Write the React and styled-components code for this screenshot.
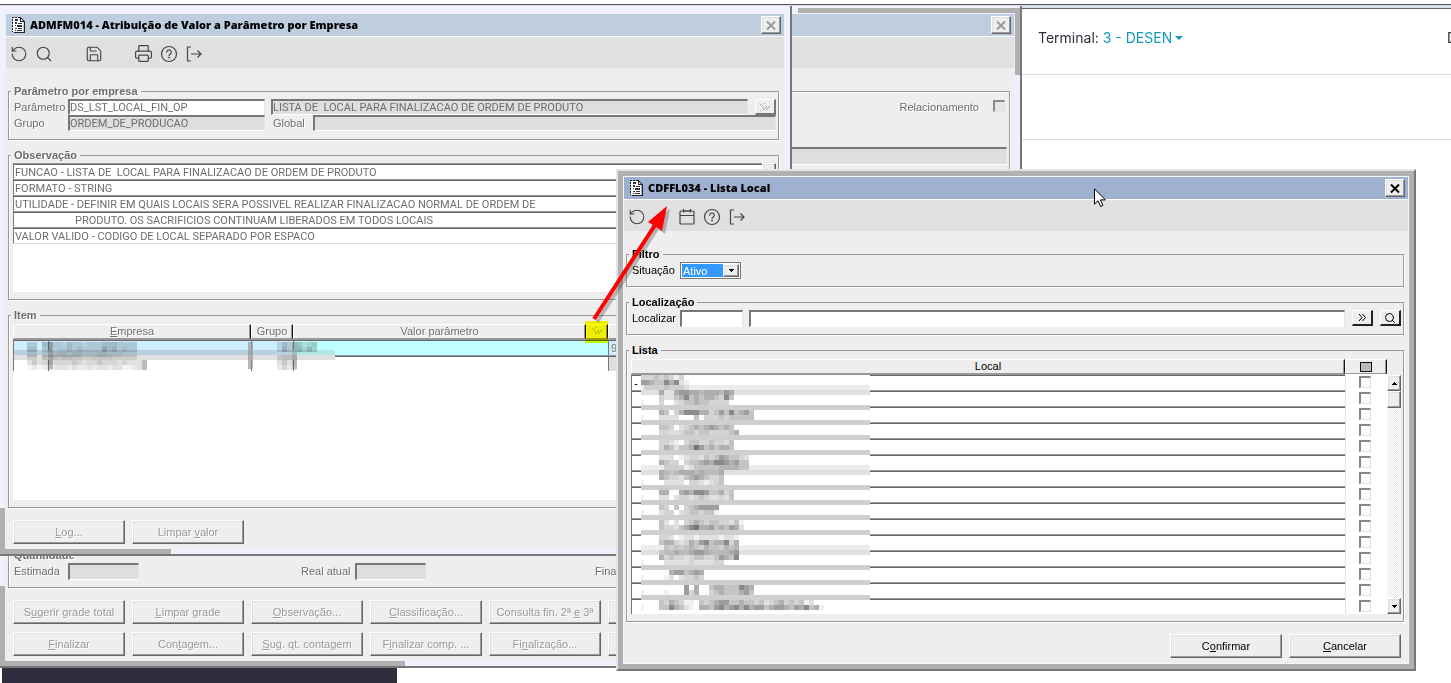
import React from "react";
import styled, { createGlobalStyle, css } from "styled-components";
import { RotateCcw, Search, Save, Printer } from "lucide-react";

const GlobalStyle = createGlobalStyle`
  * { box-sizing: border-box; }
  body {
    margin: 0;
    background: #fff;
    font-family: "Liberation Sans", Arial, sans-serif;
    font-size: 11px;
    line-height: 14px;
    color: #000;
  }
  button, input, select { font: inherit; color: inherit; margin: 0; padding: 0; border-radius: 0; }
`;

const OBSERVACOES = [
  "FUNCAO - LISTA DE  LOCAL PARA FINALIZACAO DE ORDEM DE PRODUTO",
  "FORMATO - STRING",
  "UTILIDADE - DEFINIR EM QUAIS LOCAIS SERA POSSIVEL REALIZAR FINALIZACAO NORMAL DE ORDEM DE",
  "                      PRODUTO. OS SACRIFICIOS CONTINUAM LIBERADOS EM TODOS LOCAIS",
  "VALOR VALIDO - CODIGO DE LOCAL SEPARADO POR ESPACO",
];

const ACOES = [
  ["S&ugerir grade total", "&Limpar grade", "&Observação...", "&Classificação...", "Consulta fin. 2ª &e 3ª", "Romaneio"],
  ["&Finalizar", "Con&tagem...", "&Sug. qt. contagem", "F&inalizar comp. ...", "Fi&nalização...", "Etiquetas"],
];

// censored list: one digit per 5px cell, "=" and "-" are full strips
const LISTA_MOSAICO = [
  "333434313",
  "6654475721",
  "-222232221",
  "=...4..455443444354",
  "....322457454554374",
  "1...3..23445443333",
  "=",
  "....54.3577755346474564",
  "1...2222...4.3334344444",
  "=",
  "....443.23454565454",
  "....3322344344333345",
  "=",
  "....3321.3443343324",
  "....354244586454554",
  "=",
  "....222.12332434654432",
  "....5433.3445657765644",
  "-....2222.133333444433",
  "=...4323444343334",
  "....5433245654334",
  "1....2222.3321234",
  "=",
  "....55..56577644534",
  "1...22.233234322324",
  "=",
  "....43.4.3456666",
  "1...233.23443441",
  "=",
  "....42.2.345434433241",
  "....43324578556454652",
  "=",
  "....332.122122221221",
  "....4553235467455735",
  "-....323234324332434",
  "=...2334334554333345",
  "....5343323443346547",
  "1....222223222233",
  "=",
  "......5664565",
  "1....12.23343",
  "=",
  ".........6.5..455444765",
  "1....1...635..345444564",
  "=",
  "....4354311.43456644544342345343412",
  "1...4475421.5546756757566456654657451",
];

// same coding, each strip placed by x and y inside the item grid
const ITEM_MOSAICO = [
  [14, 0, "44.5544354434445554444"],
  [14, 5, "55.4534454544447564544"],
  [14, 10, "33.2334434433344333222"],
  [14, 13, "22.4343443322333322222"],
  [14, 18, "353454444543445444343336"],
  [14, 23, "121232332322323323311236"],
  [264, 0, "35435345"],
  [264, 5, "36436464"],
  [264, 13, "3443"],
  [264, 18, "3533"],
  [264, 23, "2422"],
];

const ALPHAS = [0, 0.06, 0.12, 0.17, 0.23, 0.31, 0.38, 0.46, 0.54];

const Desktop = styled.div`
  position: relative;
  min-height: 100vh;
  overflow: hidden;
  display: flex;
  flex-direction: column;
`;

const BrowserEdge = styled.div`
  height: 9px;
  border-bottom: 1px solid #666;
  background: linear-gradient(#fff 4px, #555 4px, #555 5px, #d4e0ee 5px, #d4e0ee 8px);
`;

const SiteBar = styled.header`
  display: flex;
  justify-content: space-between;
  height: ${(p) => p.$h}px;
  padding: 19px 0 0 1038px;
  border-bottom: 1px solid #ddd;
  overflow: hidden;
  white-space: nowrap;
  font-family: Inter, sans-serif;
  font-size: 14px;
  line-height: 20px;
  color: #2e2e3e;
`;

const TerminalLink = styled.a`
  color: #149ab5;
  text-decoration: none;
  &::after {
    content: "";
    display: inline-block;
    margin-left: 3px;
    vertical-align: 3px;
    border: 4px solid transparent;
    border-top-color: #149ab5;
    border-bottom: 0;
  }
`;

const SiteUser = styled.span`
  width: 4px;
`;

const SiteFooter = styled.div`
  width: 395px;
  height: 15px;
  margin: auto 0 0 2px;
  background: #2e2e3e;
`;

const windowBase = css`
  position: absolute;
  left: ${(p) => p.$x}px;
  top: ${(p) => p.$y}px;
  width: ${(p) => p.$w}px;
`;

const MdiWindow = styled.section`
  ${windowBase}
  padding: 8px 5px 5px;
  border-right: 2px solid #777;
  border-bottom: 2px solid #777;
  color: #6e6e6e;
  text-shadow: 1px 1px 0 #fff;
  background:
    linear-gradient(#b0b0b0, #b0b0b0) 0 100% / 5px ${(p) => p.$barH}px no-repeat,
    linear-gradient(#b0b0b0, #b0b0b0) 0 100% / ${(p) => p.$barW}px 5px no-repeat,
    ${(p) =>
      p.$back &&
      css`
        linear-gradient(#b0b0b0, #b0b0b0) 798px 2px / 222px 5px no-repeat,
        linear-gradient(#b0b0b0, #b0b0b0) 100% 2px / 5px 67px no-repeat,
      `}
    #f0f0ff;
`;

const Dialog = styled.section`
  ${windowBase}
  padding: 5px;
  border: 2px solid;
  border-color: #e4e4e4 #777 #777 #e4e4e4;
  background: #b0b0b0;
`;

const WindowInner = styled.div`
  padding: ${(p) => (p.$framed ? "0" : "0 1px")};
  border: ${(p) => (p.$framed ? "1px solid #f6f6f6" : "0")};
  background: #eee;
`;

const TitleBar = styled.header`
  display: flex;
  align-items: center;
  height: 23px;
  padding: 0 3px 0 6px;
  gap: 5px;
  border-bottom: 1px solid #fff;
  background: ${(p) => (p.$active ? "#a0b0d0" : "#bfcedf")};
`;

const TitleText = styled.h1`
  flex: 1;
  margin: 0;
  font-family: "Open Sans", sans-serif;
  font-size: 11px;
  line-height: 14px;
  font-weight: 800;
  color: #000;
  text-shadow: none;
  white-space: nowrap;
`;

const raised = css`
  border: 1px solid;
  border-color: #fff #666 #666 #fff;
  box-shadow: inset -1px -1px 0 #999, inset 1px 1px 0 #e0e0e0;
  background: #eee;
`;

const CloseButton = styled.button`
  ${raised}
  display: flex;
  align-items: center;
  justify-content: center;
  width: 20px;
  height: 18px;
  color: ${(p) => (p.$active ? "#000" : "#999")};
`;

const Toolbar = styled.div`
  display: flex;
  align-items: center;
  height: 31px;
  padding-top: 2px;
  background: #e0e0e0;
`;

const ToolButton = styled.button`
  display: flex;
  align-items: center;
  justify-content: center;
  width: 25px;
  height: 25px;
  margin-left: ${(p) => (p.$gap ? 25 : 0)}px;
  border: 0;
  background: none;
  color: #444;
`;

const Body = styled.div`
  display: flex;
  flex-direction: column;
  gap: 8px;
  padding: 16px ${(p) => (p.$wide ? 4 : 5)}px 5px 2px;
`;

const Group = styled.fieldset`
  min-width: 0;
  min-height: ${(p) => p.$h || 0}px;
  margin: 0;
  padding: 1px 2px 7px 4px;
  border: 1px solid #999;
  box-shadow: 1px 1px 0 #fff, inset 1px 0 0 #fff;
`;

const Legend = styled.legend`
  height: 14px;
  margin-left: -2px;
  padding: 0 3px;
  font-weight: 700;
  background: #eee;
`;

const Row = styled.div`
  display: flex;
`;

const Label = styled.label`
  width: ${(p) => p.$w}px;
  padding: 1px 0 0 1px;
  white-space: nowrap;
`;

const Field = styled.input`
  flex: ${(p) => (p.$w ? "none" : 1)};
  width: ${(p) => (p.$w ? p.$w + "px" : "auto")};
  min-width: 0;
  height: ${(p) => p.$h || 16}px;
  margin-right: ${(p) => p.$gap || 0}px;
  border: solid;
  border-width: 2px 1px 1px 2px;
  border-color: #777 #e4e4e4 #fff #777;
  background: ${(p) => (p.$off ? "#dedede" : "#fff")};
  font-family: Roboto, sans-serif;
  text-shadow: none;
  outline: 0;
`;

const SmallButton = styled.button`
  display: flex;
  align-items: center;
  justify-content: center;
  width: 21px;
  height: 16px;
  margin-left: 7px;
  border: solid;
  border-width: 1px 2px 2px 1px;
  border-color: #fff ${(p) => (p.$off ? "#777 #777" : "#222 #222")} #fff;
  background: #eee;
`;

const Lines = styled.div`
  display: flex;
  height: 129px;
  background: #fff;
`;

const LineList = styled.ul`
  flex: 1;
  margin: 0;
  padding: 0;
  list-style: none;
  font-family: Roboto, sans-serif;
  text-shadow: none;
`;

const Line = styled.li`
  height: 16px;
  padding-left: 1px;
  border-top: 1px solid #999;
  border-left: 1px solid #777;
  box-shadow: inset 0 1px 0 #666;
  line-height: 17px;
  white-space: pre;
  &:last-child {
    height: 17px;
    border-bottom: 1px solid #ddd;
  }
`;

const ScrollButton = styled.button`
  ${raised}
  display: flex;
  align-items: center;
  justify-content: center;
  width: 14px;
  height: ${(p) => p.$h || 16}px;
`;

const ItemArea = styled.div`
  position: relative;
  height: 177px;
  padding-top: 1px;
  background: linear-gradient(#eee 16px, #fff 16px);
`;

const Grid = styled.table`
  width: 100%;
  table-layout: fixed;
  border-collapse: separate;
  border-spacing: 0;
`;

const Th = styled.th`
  height: 15px;
  padding: 0;
  font-weight: 400;
  line-height: 13px;
  border: 1px solid;
  border-color: #fff #111 #999 #fff;
  box-shadow: inset -1px 0 0 #999;
  background: #eee;
`;

const Td = styled.td`
  height: 16px;
  padding: 0 0 0 2px;
  line-height: 12px;
  border-top: 1px solid #999;
  border-left: 1px solid #777;
  box-shadow: inset 0 1px 0 #666;
  background: ${(p) => p.$bg || "#fff"};
`;

const CheckTd = styled.td`
  height: 16px;
  padding: 0 4px 0 0;
  line-height: 0;
  text-align: center;
  background: #fff;
  border-left: 1px solid #e0e0e0;
`;

const Check = styled.input.attrs({ type: "checkbox" })`
  appearance: none;
  width: 12px;
  height: 12px;
  border: solid;
  border-width: 2px 1px 1px 2px;
  border-color: #888 #e0e0e0 #e0e0e0 #888;
  background: ${(p) => (p.$off ? "#e6e6e6" : "#fff")};
`;

const CheckAll = styled.button`
  display: block;
  width: 12px;
  height: 10px;
  margin: 0 auto;
  border: 1px solid #111;
  background: #bbb;
`;

const Buttons = styled.div`
  display: flex;
  justify-content: ${(p) => (p.$end ? "flex-end" : "flex-start")};
  gap: 7px;
  margin-top: ${(p) => (p.$first ? 4 : 0)}px;
  padding: 0 3px 0 5px;
  overflow: hidden;
`;

const PushButton = styled.button`
  ${raised}
  flex: none;
  width: 112px;
  height: 24px;
  white-space: nowrap;
  color: ${(p) => (p.disabled ? "#999" : "#000")};
  text-shadow: ${(p) => (p.disabled ? "1px 1px 0 #fff" : "none")};
`;

const SelectBox = styled.div`
  display: flex;
  width: 61px;
  height: 17px;
  padding: 1px;
  border: 1px solid #777;
  background: #fff;
`;

const Select = styled.select`
  appearance: none;
  flex: 1;
  min-width: 0;
  padding: 0 1px;
  border: 0;
  outline: 0;
  background: #3399ff;
  color: #fff;
`;

const SelectArrow = styled.span`
  ${raised}
  display: flex;
  align-items: center;
  justify-content: center;
  width: 16px;
`;

const ListArea = styled.div`
  position: relative;
  display: flex;
  align-items: stretch;
  padding-top: 1px;
`;

const ScrollBar = styled.div`
  display: flex;
  flex-direction: column;
  justify-content: space-between;
  flex: none;
  width: 14px;
  margin-top: 16px;
  background: repeating-conic-gradient(#e9e9e9 0 25%, #fff 0 50%) 0 0 / 2px 2px;
`;

const Overlay = styled.svg`
  position: absolute;
  left: ${(p) => p.$x}px;
  top: ${(p) => p.$y}px;
  pointer-events: none;
`;

const Highlight = styled.div`
  position: absolute;
  left: 585px;
  top: 321px;
  width: 23px;
  height: 22px;
  background: #ff0;
  mix-blend-mode: multiply;
  pointer-events: none;
`;

const BackGroup = styled.div`
  height: 449px;
  margin-top: 7px;
  padding: 8px 2px 0 4px;
  border: 1px solid #999;
  box-shadow: 1px 1px 0 #fff, inset 1px 1px 0 #fff;
`;

const RelRow = styled.div`
  display: flex;
  justify-content: flex-end;
  gap: 14px;
  height: 47px;
  padding-right: 2px;
`;

// "&" marks the access key, as in the menu resources
const Mnemonic = ({ text }) => {
  const i = text.indexOf("&");
  if (i < 0) return text;
  return (
    <>
      {text.slice(0, i)}
      <u>{text[i + 1]}</u>
      {text.slice(i + 2)}
    </>
  );
};

const DocIcon = () => (
  <svg width="13" height="16" viewBox="0 0 13 16" shapeRendering="crispEdges" aria-hidden="true">
    <path d="M1 1h7v1h1v1h1v1h1v11H1z" fill="#fff" />
    <path d="M0 0h2v1H0zM3 0h2v1H3zM6 0h3v1H6zM9 1h1v1H9zM10 2h1v1h-1zM11 3h1v1h-1zM12 4h1v12h-1zM2 15h11v1H2zM8 1h1v4H8zM9 4h3v1H9zM0 2h1v2H0zM0 5h1v2H0zM0 8h1v2H0zM0 11h1v2H0zM0 14h1v1H0z" fill="#222" />
    <path d="M3 2h3v2H3zM3 5h2v2H3zM6 6h4v1H6zM3 8h1v1H3zM5 8h5v2H5zM3 11h2v1H3zM6 11h4v1H6zM3 13h1v1H3zM5 13h5v1H5z" fill="#333" />
  </svg>
);

const CloseIcon = () => (
  <svg width="10" height="9" viewBox="0 0 10 9" aria-hidden="true">
    <path d="M1 0.500l8 8M9 0.500l-8 8" stroke="currentColor" strokeWidth="2" />
  </svg>
);

const HelpIcon = () => (
  <svg width="18" height="18" viewBox="0 0 18 18" fill="none" stroke="currentColor" strokeLinecap="round" aria-hidden="true">
    <circle cx="9" cy="9" r="7.500" strokeWidth="1.200" />
    <path d="M6.700 7.200a2.300 2.300 0 1 1 3.600 1.900c-.8.500-1.300.9-1.300 1.600" strokeWidth="1.200" />
    <circle cx="9" cy="12.700" r=".4" fill="currentColor" />
  </svg>
);

const ExitIcon = () => (
  <svg width="18" height="18" viewBox="0 0 18 18" fill="none" stroke="currentColor" strokeWidth="1.200" aria-hidden="true">
    <path d="M6 2H2.500v14H6M6 9h10M12.500 5.500L16 9l-3.500 3.500" />
  </svg>
);

const CalendarIcon = () => (
  <svg width="18" height="18" viewBox="0 0 18 18" fill="none" stroke="currentColor" strokeWidth="1.200" aria-hidden="true">
    <rect x="2" y="3" width="14" height="13" rx="1" />
    <path d="M2 7.500h14M5.500 1v3.500M12.500 1v3.500M5.500 3h7" />
  </svg>
);

const LinkIcon = () => (
  <svg width="10" height="8" viewBox="0 0 10 8" shapeRendering="crispEdges" aria-hidden="true">
    <path d="M0 1h1v1H0zM2 2h1v1H2zM4 0h1v1H4zM2 4h1v1H2zM6 3h1v1H6zM5 4h1v1H5zM4 5h1v1H4zM3 6h1v1H3zM9 3h1v1H9zM8 4h1v1H8zM7 5h1v1H7zM6 6h1v1H6z" fill="#999" />
  </svg>
);

const Triangle = ({ up }) => (
  <svg width="5" height="3" viewBox="0 0 5 3" shapeRendering="crispEdges" aria-hidden="true">
    <path d={up ? "M2 0h1v1h1v1h1v1H0V2h1V1h1z" : "M0 0h5v1H4v1H3v1H2V2H1V1H0z"} />
  </svg>
);

const Mosaic = () => (
  <Overlay $x={10} $y={17} width="229" height="236" shapeRendering="crispEdges" aria-hidden="true">
    <rect width="229" height="235" fill="#fff" />
    {LISTA_MOSAICO.map((line, r) => (
      <g key={r}>
        {/[-=]/.test(line[0]) && (
          <rect y={r * 5} width="229" height="5" fill={line[0] === "-" ? "#ececec" : line.length > 1 ? "#e0e0e0" : "#cfcfcf"} />
        )}
        {line.split("").map((ch, c) =>
          Number(ch) > 0 ? (
            <rect key={c} x={c ? c * 5 - 2 : 0} y={r * 5} width={c ? 5 : 3} height="5" fillOpacity={ALPHAS[ch]} />
          ) : null
        )}
      </g>
    ))}
  </Overlay>
);

const ItemMosaic = () => (
  <Overlay $x={0} $y={19} width="322" height="28" shapeRendering="crispEdges" aria-hidden="true">
    <rect x="1" y="8" width="279" height="5" fill="#b9d1df" />
    <rect x="280" y="8" width="42" height="5" fill="#b0e6e6" />
    <rect x="1" y="13" width="321" height="5" fill="#e0e0e0" />
    <path d="M237 0v27" stroke="#999" strokeOpacity=".7" strokeWidth="5" />
    <path d="M37 0v27M281 0v27" stroke="#888" strokeOpacity=".4" strokeWidth="5" />
    {ITEM_MOSAICO.map(([x, y, cells]) =>
      cells.split("").map((ch, c) => (
        <rect key={x + "-" + y + "-" + c} x={x + c * 5} y={y} width="5" height="5" fillOpacity={(ALPHAS[ch] || 0) * 0.7} />
      ))
    )}
  </Overlay>
);

const WindowTitle = ({ title, active }) => (
  <TitleBar $active={active}>
    {title && <DocIcon />}
    <TitleText>{title}</TitleText>
    <CloseButton $active={active} aria-label="Fechar">
      <CloseIcon />
    </CloseButton>
  </TitleBar>
);

const OrderWindow = () => (
  <MdiWindow $x={0} $y={6} $w={1022} $barH={80} $barW={405} $back>
    <WindowInner>
      <WindowTitle />
      <Toolbar />
      <Body $wide>
        <BackGroup>
          <RelRow>
            <label htmlFor="relacionamento">Relacionamento</label>
            <Check id="relacionamento" $off disabled />
          </RelRow>
          <Row>
            <Field aria-label="Descrição" $h={18} $off readOnly />
          </Row>
        </BackGroup>
        <Group>
          <Legend>Quantidade</Legend>
          <Row>
            <Label htmlFor="estimada" $w={55}>Estimada</Label>
            <Field id="estimada" $w={71} $h={17} $gap={161} $off readOnly />
            <Label htmlFor="real" $w={55}>Real atual</Label>
            <Field id="real" $w={71} $h={17} $gap={168} $off readOnly />
            <Label htmlFor="final" $w={55}>Finalizada</Label>
            <Field id="final" $w={71} $h={17} $off readOnly />
          </Row>
        </Group>
        {ACOES.map((row, i) => (
          <Buttons key={i} $first={i === 0}>
            {row.map((text) => (
              <PushButton key={text} disabled>
                <Mnemonic text={text} />
              </PushButton>
            ))}
          </Buttons>
        ))}
      </Body>
    </WindowInner>
  </MdiWindow>
);

const ParameterWindow = () => (
  <MdiWindow $x={0} $y={6} $w={792} $barH={46} $barW={171}>
    <WindowInner>
      <WindowTitle title="ADMFM014 - Atribuição de Valor a Parâmetro por Empresa" />
      <Toolbar>
        <ToolButton aria-label="Desfazer"><RotateCcw size={18} strokeWidth={1.5} /></ToolButton>
        <ToolButton aria-label="Pesquisar"><Search size={18} strokeWidth={1.5} /></ToolButton>
        <ToolButton aria-label="Salvar" $gap><Save size={18} strokeWidth={1.5} /></ToolButton>
        <ToolButton aria-label="Imprimir" $gap><Printer size={19} strokeWidth={1.5} /></ToolButton>
        <ToolButton aria-label="Ajuda"><HelpIcon /></ToolButton>
        <ToolButton aria-label="Sair"><ExitIcon /></ToolButton>
      </Toolbar>
      <Body>
        <Group $h={56}>
          <Legend>Parâmetro por empresa</Legend>
          <Row>
            <Label htmlFor="parametro" $w={55}>Parâmetro</Label>
            <Field id="parametro" $w={197} $gap={6} defaultValue="DS_LST_LOCAL_FIN_OP" />
            <Field aria-label="Descrição" $off readOnly value="LISTA DE  LOCAL PARA FINALIZACAO DE ORDEM DE PRODUTO" />
            <SmallButton $off aria-label="Abrir parâmetro"><LinkIcon /></SmallButton>
          </Row>
          <Row>
            <Label htmlFor="grupo" $w={55}>Grupo</Label>
            <Field id="grupo" $w={197} $gap={7} $off readOnly value="ORDEM_DE_PRODUCAO" />
            <Label htmlFor="global" $w={41}>Global</Label>
            <Field id="global" $off readOnly />
          </Row>
        </Group>
        <Group>
          <Legend>Observação</Legend>
          <Lines>
            <LineList>
              {OBSERVACOES.map((text) => (
                <Line key={text}>{text}</Line>
              ))}
            </LineList>
            <ScrollButton aria-label="Subir"><Triangle up /></ScrollButton>
          </Lines>
        </Group>
        <Group>
          <Legend>Item</Legend>
          <ItemArea>
            <Grid>
              <colgroup>
                <col width="35" />
                <col width="203" />
                <col width="42" />
                <col width="293" />
                <col width="22" />
                <col />
              </colgroup>
              <thead>
                <tr>
                  <Th colSpan={2}><Mnemonic text="&Empresa" /></Th>
                  <Th>Grupo</Th>
                  <Th>Valor parâmetro</Th>
                  <Th><LinkIcon /></Th>
                  <Th />
                </tr>
              </thead>
              <tbody>
                <tr>
                  <Td $bg="#cdeeff" />
                  <Td $bg="#cdeeff" />
                  <Td $bg="#cdeeff" />
                  <Td $bg="#c0ffff" colSpan={2} />
                  <Td $bg="#cdeeff">9</Td>
                </tr>
                <tr>
                  <Td />
                  <Td />
                  <Td />
                  <Td colSpan={2} />
                  <Td $bg="#dedede" />
                </tr>
              </tbody>
            </Grid>
            <ItemMosaic />
          </ItemArea>
        </Group>
        <Buttons $first>
          <PushButton disabled><Mnemonic text="&Log..." /></PushButton>
          <PushButton disabled><Mnemonic text="Limpar &valor" /></PushButton>
        </Buttons>
      </Body>
    </WindowInner>
  </MdiWindow>
);

const LocalDialog = () => (
  <Dialog $x={616} $y={169} $w={800}>
    <WindowInner $framed>
      <WindowTitle title="CDFFL034 - Lista Local" active />
      <Toolbar>
        <ToolButton aria-label="Desfazer"><RotateCcw size={18} strokeWidth={1.5} /></ToolButton>
        <ToolButton aria-label="Calendário" $gap><CalendarIcon /></ToolButton>
        <ToolButton aria-label="Ajuda"><HelpIcon /></ToolButton>
        <ToolButton aria-label="Sair"><ExitIcon /></ToolButton>
      </Toolbar>
      <Body $wide>
        <Group>
          <Legend>Filtro</Legend>
          <Row>
            <Label htmlFor="situacao" $w={49}>Situação</Label>
            <SelectBox>
              <Select id="situacao" defaultValue="Ativo">
                <option>Ativo</option>
                <option>Inativo</option>
              </Select>
              <SelectArrow><Triangle /></SelectArrow>
            </SelectBox>
          </Row>
        </Group>
        <Group>
          <Legend>Localização</Legend>
          <Row>
            <Label htmlFor="localizar" $w={49}>Localizar</Label>
            <Field id="localizar" $w={63} $h={17} $gap={6} />
            <Field aria-label="Descrição do local" $h={17} />
            <SmallButton aria-label="Próximo">
              <svg width="9" height="9" viewBox="0 0 9 9" fill="none" stroke="#000" aria-hidden="true">
                <path d="M1 1l3 3.500L1 8M4.500 1l3 3.500L4.500 8" />
              </svg>
            </SmallButton>
            <SmallButton aria-label="Pesquisar local">
              <Search size={12} strokeWidth={2} />
            </SmallButton>
          </Row>
        </Group>
        <Group>
          <Legend>Lista</Legend>
          <ListArea>
            <Grid>
              <colgroup>
                <col />
                <col width="42" />
              </colgroup>
              <thead>
                <tr>
                  <Th>Local</Th>
                  <Th><CheckAll aria-label="Marcar todos" /></Th>
                </tr>
              </thead>
              <tbody>
                {Array.from({ length: 15 }, (_, i) => (
                  <tr key={i}>
                    <Td>{i === 0 ? "-" : ""}</Td>
                    <CheckTd><Check aria-label={"Local " + (i + 1)} /></CheckTd>
                  </tr>
                ))}
              </tbody>
            </Grid>
            <ScrollBar>
              <div>
                <ScrollButton aria-label="Subir"><Triangle up /></ScrollButton>
                <ScrollButton $h={17} aria-label="Posição" />
              </div>
              <ScrollButton aria-label="Descer"><Triangle /></ScrollButton>
            </ScrollBar>
            <Mosaic />
          </ListArea>
        </Group>
        <Buttons $first $end>
          <PushButton><Mnemonic text="C&onfirmar" /></PushButton>
          <PushButton><Mnemonic text="&Cancelar" /></PushButton>
        </Buttons>
      </Body>
    </WindowInner>
  </Dialog>
);

const App = () => {
  return (
    <Desktop>
      <GlobalStyle />
      <BrowserEdge />
      <SiteBar $h={66}>
        <span>
          Terminal: <TerminalLink href="#terminal">3 - DESEN</TerminalLink>
        </span>
        <SiteUser>D</SiteUser>
      </SiteBar>
      <SiteBar as="div" $h={65} />
      <SiteFooter />
      <OrderWindow />
      <ParameterWindow />
      <Highlight />
      <LocalDialog />
      <Overlay $x={585} $y={198} width="100" height="130" aria-hidden="true">
        <g opacity=".3" transform="translate(3 3)">
          <path d="M9 121L72 23" stroke="#333" strokeWidth="4" />
          <path d="M82 8L63 24l7 4 7 5z" fill="#333" />
        </g>
        <path d="M9 121L72 24" stroke="#f00" strokeWidth="4" />
        <path d="M82 8L63 24l7 4 7 5z" fill="#f00" />
      </Overlay>
      <Overlay $x={1094} $y={188} width="13" height="20" viewBox="0 0 13 20" aria-hidden="true">
        <path d="M.5.800v15.400l3.600-3.500 2.500 5.800 2.300-1-2.500-5.600h5z" fill="#fff" stroke="#000" />
      </Overlay>
    </Desktop>
  );
};

export default App;
